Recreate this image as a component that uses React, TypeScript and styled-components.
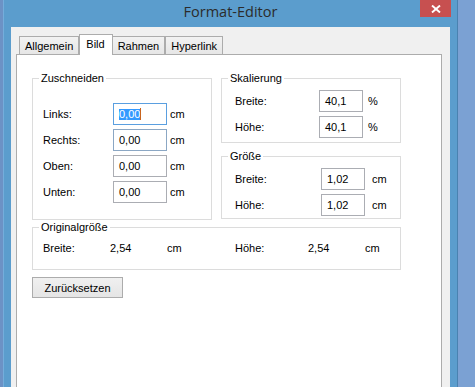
import React from "react";
import styled, { createGlobalStyle, css } from "styled-components";

const GlobalStyle = createGlobalStyle`
  html, body { margin: 0; padding: 0; }
  body {
    background: #7ba1d3;
    font-family: "Liberation Sans", Arial, sans-serif;
    overflow: hidden;
  }
`;

const Screen = styled.div`
  display: flex;
  width: 475px;
  height: 387px;
  background: #7ba1d3;
  overflow: hidden;
`;

const DeskStrip = styled.div`
  width: 3px;
  flex-shrink: 0;
  background: #6c92c5;
`;

const Window = styled.div`
  width: 455px;
  flex-shrink: 0;
  box-sizing: border-box;
  display: flex;
  flex-direction: column;
  background: #5b9dcd;
  border-left: 1px solid #74addb;
  border-right: 1px solid #4a82b0;
`;

const TitleBar = styled.div`
  height: 27px;
  flex-shrink: 0;
  display: grid;
  grid-template-columns: 1fr auto 1fr;
  align-items: start;
`;

const Title = styled.div`
  grid-column: 2;
  font-family: "Open Sans", "Liberation Sans", sans-serif;
  font-size: 14.5px;
  line-height: 23px;
  color: #2b2b2b;
  white-space: nowrap;
`;

const CloseButton = styled.div`
  grid-column: 3;
  justify-self: end;
  width: 31px;
  height: 17px;
  margin-right: 6px;
  background: #c75050;
  display: flex;
  align-items: center;
  justify-content: center;
`;

const Client = styled.div`
  flex: 1;
  margin: 0 7px;
  background: #f0f0f0;
  padding: 7px 8px 0 5px;
  display: flex;
  flex-direction: column;
  min-height: 0;
`;

const TabRow = styled.div`
  display: flex;
  align-items: flex-end;
  padding-left: 3px;
  position: relative;
  z-index: 1;
`;

const Tab = styled.div<{ $active?: boolean }>`
  box-sizing: border-box;
  height: 18px;
  padding: 0 5px;
  border: 1px solid #acacac;
  border-bottom: none;
  background: linear-gradient(#f2f2f2, #e6e6e6);
  font-size: 11px;
  color: #000;
  display: flex;
  align-items: center;
  ${(p) =>
    p.$active &&
    css`
      height: 21px;
      padding: 0 7px 2px 6px;
      margin: 0 -1px -1px 0;
      background: #fff;
      position: relative;
    `}
`;

const Panel = styled.div`
  flex: 1;
  background: #fff;
  border: 1px solid #acacac;
  border-bottom: none;
`;

const Content = styled.div`
  display: flex;
  flex-direction: column;
  align-items: flex-start;
  padding: 17px 0 0 15px;
  width: 369px;
`;

const TopRow = styled.div`
  display: grid;
  grid-template-columns: 180px 180px;
  column-gap: 9px;
`;

const RightColumn = styled.div`
  display: flex;
  flex-direction: column;
  gap: 7px;
`;

const GroupBox = styled.fieldset`
  margin: 0;
  min-width: 0;
  padding: 0;
  border: 1px solid #dcdcdc;
  box-sizing: border-box;
`;

const WideGroup = styled(GroupBox)`
  width: 369px;
  margin-top: 1px;
`;

const Legend = styled.legend`
  padding: 0 2px;
  margin-left: 6px;
  font-size: 11px;
  line-height: 13px;
  color: #000;
`;

const FieldGrid = styled.div<{ $cols: string; $gap: number; $pad: string }>`
  display: grid;
  grid-template-columns: ${(p) => p.$cols};
  grid-auto-rows: 22px;
  row-gap: 4px;
  column-gap: ${(p) => p.$gap}px;
  align-items: center;
  padding: ${(p) => p.$pad};
`;

const Label = styled.span`
  font-size: 11px;
  line-height: 13px;
  color: #000;
  white-space: nowrap;
`;

const Field = styled.div<{ $border: string }>`
  box-sizing: border-box;
  height: 22px;
  border: 1px solid ${(p) => p.$border};
  background: #fff;
  padding-left: 5px;
  display: flex;
  align-items: center;
  font-size: 11px;
  color: #000;
`;

const Selection = styled.span`
  background: #3399ff;
  color: #fff;
  line-height: 11px;
`;

const Caret = styled.span`
  width: 1px;
  height: 12px;
  background: #c8641e;
`;

const InfoRow = styled.div`
  display: grid;
  grid-template-columns: 67px 57px 68px 73px 57px auto;
  align-items: center;
  padding: 8px 0 14px 10px;
`;

const Button = styled.button`
  margin-top: 7px;
  box-sizing: border-box;
  width: 91px;
  height: 21px;
  padding: 0;
  border: 1px solid #acacac;
  background: linear-gradient(#f0f0f0, #e5e5e5);
  font-family: "Liberation Sans", Arial, sans-serif;
  font-size: 11px;
  color: #000;
`;

const FOCUS = "#5a9fe0";
const HOVER = "#8ba7c4";
const NORMAL = "#abadb3";

const crop = [
  { label: "Links:", border: FOCUS, selected: true },
  { label: "Rechts:", border: HOVER },
  { label: "Oben:", border: NORMAL },
  { label: "Unten:", border: NORMAL },
];

export default function App() {
  return (
    <>
      <GlobalStyle />
      <Screen>
        <DeskStrip />
        <Window>
          <TitleBar>
            <Title>Format-Editor</Title>
            <CloseButton>
              <svg width="10" height="8" viewBox="0 0 10 8">
                <path d="M1 0.5 L9 7.5 M9 0.5 L1 7.5" stroke="#fff" strokeWidth="1.9" />
              </svg>
            </CloseButton>
          </TitleBar>
          <Client>
            <TabRow>
              <Tab>Allgemein</Tab>
              <Tab $active>Bild</Tab>
              <Tab>Rahmen</Tab>
              <Tab>Hyperlink</Tab>
            </TabRow>
            <Panel>
              <Content>
                <TopRow>
                  <GroupBox>
                    <Legend>Zuschneiden</Legend>
                    <FieldGrid $cols="67px 54px auto" $gap={3} $pad="18px 0 16px 10px">
                      {crop.map((r) => (
                        <React.Fragment key={r.label}>
                          <Label>{r.label}</Label>
                          <Field $border={r.border}>
                            {r.selected ? (
                              <>
                                <Selection>0,00</Selection>
                                <Caret />
                              </>
                            ) : (
                              "0,00"
                            )}
                          </Field>
                          <Label>cm</Label>
                        </React.Fragment>
                      ))}
                    </FieldGrid>
                  </GroupBox>
                  <RightColumn>
                    <GroupBox>
                      <Legend>Skalierung</Legend>
                      <FieldGrid $cols="79px 44px auto" $gap={5} $pad="5px 0 4px 13px">
                        <Label>Breite:</Label>
                        <Field $border={NORMAL}>40,1</Field>
                        <Label>%</Label>
                        <Label>Höhe:</Label>
                        <Field $border={NORMAL}>40,1</Field>
                        <Label>%</Label>
                      </FieldGrid>
                    </GroupBox>
                    <GroupBox>
                      <Legend>Größe</Legend>
                      <FieldGrid $cols="79px 44px auto" $gap={7} $pad="5px 0 2px 13px">
                        <Label>Breite:</Label>
                        <Field $border={NORMAL}>1,02</Field>
                        <Label>cm</Label>
                        <Label>Höhe:</Label>
                        <Field $border={NORMAL}>1,02</Field>
                        <Label>cm</Label>
                      </FieldGrid>
                    </GroupBox>
                  </RightColumn>
                </TopRow>
                <WideGroup>
                  <Legend>Originalgröße</Legend>
                  <InfoRow>
                    <Label>Breite:</Label>
                    <Label>2,54</Label>
                    <Label>cm</Label>
                    <Label>Höhe:</Label>
                    <Label>2,54</Label>
                    <Label>cm</Label>
                  </InfoRow>
                </WideGroup>
                <Button>Zurücksetzen</Button>
              </Content>
            </Panel>
          </Client>
        </Window>
      </Screen>
    </>
  );
}
